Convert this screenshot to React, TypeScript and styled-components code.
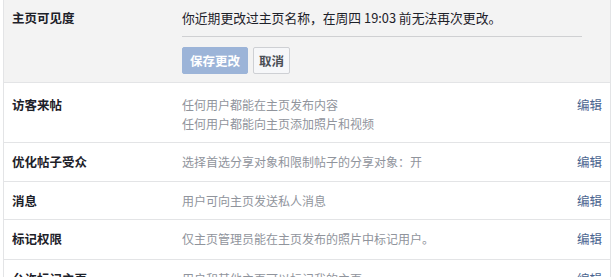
import React from "react";
import styled, { createGlobalStyle } from "styled-components";

const Global = createGlobalStyle`
  html, body { margin: 0; padding: 0; background: #fff; }
  body { font-family: "Noto Sans CJK SC", "Liberation Sans", sans-serif; }
`;

const Panel = styled.div`
  margin-left: 3px;
  width: 606px;
  border-left: 1px solid #e3e4e6;
  border-right: 1px solid #e3e4e6;
`;

const Header = styled.div`
  background: #f3f3f3;
  display: grid;
  grid-template-columns: 170px 1fr;
  padding: 8px 0 6px 8px;
  border-bottom: 1px solid #e3e4e6;
  height: 68px;
`;

const Label = styled.div`
  font-size: 12.5px;
  font-weight: bold;
  color: #1d2129;
  line-height: 20px;
`;

const HeaderBody = styled.div`
  display: flex;
  flex-direction: column;
  padding-right: 28px;
`;

const Notice = styled.div`
  font-size: 12.8px;
  color: #1d2129;
  line-height: 20px;
  padding-bottom: 8px;
  border-bottom: 1px solid #cfd0d2;
`;

const Buttons = styled.div`
  display: flex;
  gap: 5px;
  margin-top: 10px;
`;

const Btn = styled.button<{ $primary?: boolean }>`
  font-family: inherit;
  font-size: 12.5px;
  font-weight: bold;
  height: 27px;
  padding: 0 ${(p) => (p.$primary ? "7px" : "5px")};
  border-radius: 2px;
  border: 1px solid ${(p) => (p.$primary ? "#9cb4d8" : "#ced0d4")};
  background: ${(p) => (p.$primary ? "#9cb4d8" : "#f6f7f9")};
  color: ${(p) => (p.$primary ? "#fff" : "#4b4f56")};
  line-height: 25px;
`;

const Row = styled.div<{ $h: number; $pt: number }>`
  display: grid;
  grid-template-columns: 170px 1fr auto;
  padding: ${(p) => p.$pt}px 8px 0 8px;
  height: ${(p) => p.$h}px;
  box-sizing: border-box;
  border-bottom: 1px solid #e3e4e6;
`;

const Desc = styled.div`
  font-size: 12px;
  color: #90949c;
  line-height: 19px;
`;

const Edit = styled.a`
  font-size: 12.5px;
  color: #4b6590;
  line-height: 20px;
`;

const rows: { label: string; desc: string[]; h: number; pt: number }[] = [
  { label: "访客来帖", desc: ["任何用户都能在主页发布内容", "任何用户都能向主页添加照片和视频"], h: 60, pt: 12 },
  { label: "优化帖子受众", desc: ["选择首选分享对象和限制帖子的分享对象：开"], h: 39, pt: 9 },
  { label: "消息", desc: ["用户可向主页发送私人消息"], h: 38, pt: 9 },
  { label: "标记权限", desc: ["仅主页管理员能在主页发布的照片中标记用户。"], h: 40, pt: 9 },
  { label: "允许标记主页", desc: ["用户和其他主页可以标记我的主页"], h: 39, pt: 9 },
];

export default function App() {
  return (
    <>
      <Global />
      <Panel>
        <Header>
          <Label>主页可见度</Label>
          <HeaderBody>
            <Notice>你近期更改过主页名称，在周四 19:03 前无法再次更改。</Notice>
            <Buttons>
              <Btn $primary>保存更改</Btn>
              <Btn>取消</Btn>
            </Buttons>
          </HeaderBody>
        </Header>
        {rows.map((r) => (
          <Row key={r.label} $h={r.h} $pt={r.pt}>
            <Label>{r.label}</Label>
            <Desc>
              {r.desc.map((d) => (
                <div key={d}>{d}</div>
              ))}
            </Desc>
            <Edit>编辑</Edit>
          </Row>
        ))}
      </Panel>
    </>
  );
}
